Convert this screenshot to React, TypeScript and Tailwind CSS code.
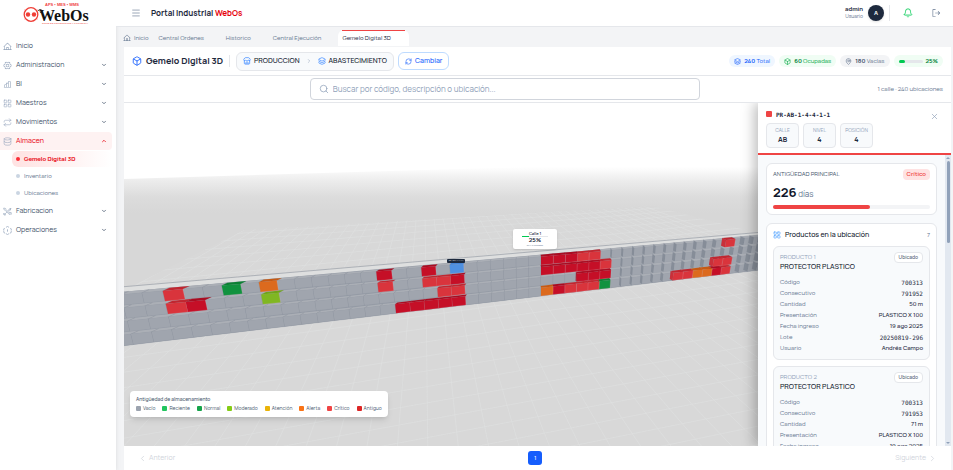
// Portal shell with the "Gemelo Digital 3D" warehouse view
import React, { useState } from 'react';
import {
  Bell,
  Box,
  ChevronDown,
  ChevronLeft,
  ChevronRight,
  ChevronUp,
  Database,
  Layers,
  LayoutGrid,
  MapPin,
  Menu,
  RefreshCw,
  Repeat,
  Search,
  Store,
  X,
} from 'lucide-react';
import { PiChartBar, PiGearSix, PiHouseLine, PiSignOut } from 'react-icons/pi';

type Tone = 'antiguo' | 'critico' | 'alerta' | 'normal' | 'moderado' | 'selected';

interface Product {
  id: number;
  name: string;
  rows: { label: string; value: string; mono?: boolean }[];
}

const legend = [
  { name: 'Vacío', color: 'bg-[#9ca3af]' },
  { name: 'Reciente', color: 'bg-[#22c55e]' },
  { name: 'Normal', color: 'bg-[#16a34a]' },
  { name: 'Moderado', color: 'bg-[#84cc16]' },
  { name: 'Atención', color: 'bg-[#eab308]' },
  { name: 'Alerta', color: 'bg-[#f97316]' },
  { name: 'Crítico', color: 'bg-[#ef4444]' },
  { name: 'Antiguo', color: 'bg-[#dc2626]' },
];

const makeProduct = (id: number, consecutivo: string, cantidad: string): Product => ({
  id,
  name: 'PROTECTOR PLASTICO',
  rows: [
    { label: 'Código', value: '700313', mono: true },
    { label: 'Consecutivo', value: consecutivo, mono: true },
    { label: 'Cantidad', value: cantidad },
    { label: 'Presentación', value: 'PLASTICO X 100' },
    { label: 'Fecha ingreso', value: '19 ago 2025' },
    { label: 'Lote', value: '20250819-296', mono: true },
    { label: 'Usuario', value: 'Andrés Campo' },
  ],
});

const products = [makeProduct(1, '791952', '50 m'), makeProduct(2, '791953', '71 m')];

// ---------- Rack drawing ----------

const tones: Record<Tone, { front: string; top: string; side: string }> = {
  antiguo: { front: '#c50f27', top: '#a90d22', side: '#b00d23' },
  critico: { front: '#d9343c', top: '#c02630', side: '#c9303a' },
  alerta: { front: '#dc6a1e', top: '#c65a14', side: '#c65a14' },
  normal: { front: '#11923f', top: '#0c8034', side: '#0c8034' },
  moderado: { front: '#80b722', top: '#6fa51a', side: '#6fa51a' },
  selected: { front: '#4f90e0', top: '#4383d6', side: '#4383d6' },
};

const emptyTone = { front: '#a0a5ae', top: '#abafb6', side: '#868d98' };

// level -> [from column, to column, tone]
const stock: [number, number, Tone][][] = [
  [[-24, -24, 'critico'], [-21, -21, 'normal'], [-19, -19, 'alerta'], [-12, -12, 'antiguo'], [-9, -9, 'antiguo'], [-7, -7, 'selected'], [0, 2, 'antiguo'], [3, 4, 'critico'], [17, 17, 'critico']],
  [[-24, -24, 'critico'], [-23, -23, 'antiguo'], [-19, -19, 'moderado'], [-12, -12, 'critico'], [-9, -8, 'critico'], [-7, -7, 'antiguo'], [0, 4, 'antiguo'], [5, 5, 'critico']],
  [[-8, -7, 'critico'], [3, 5, 'antiguo'], [16, 17, 'critico']],
  [[-11, -7, 'antiguo'], [0, 0, 'alerta'], [1, 1, 'antiguo'], [2, 4, 'critico'], [5, 5, 'normal'], [12, 13, 'critico'], [14, 15, 'alerta'], [16, 16, 'antiguo'], [17, 17, 'critico']],
];

// single cells of a level, farthest from the camera first
const cellsOf = (level: number) =>
  stock[level]
    .flatMap(([from, to, tone]) => Array.from({ length: to - from + 1 }, (_, i) => ({ column: from + i, tone })))
    .sort((a, b) => Math.abs(b.column + 6) - Math.abs(a.column + 6));

const project = (k: number, v: number) => {
  const base = k > 0 ? 417 + (12.1 * k) / (1 + 0.0086 * k) : 417 + (11.8 * k) / (1 + 0.0095 * k);
  const x = base - (417 - base) * 0.033 * (1 - v);
  const top = 188.7 - 0.089 * x;
  const bottom = 242.7 - 0.119 * x;
  return [x, top + (bottom - top) * v] as const;
};

const pts = (list: (readonly [number, number])[]) =>
  list.map(([x, y]) => `${x.toFixed(1)},${y.toFixed(1)}`).join(' ');

function Cell({ column, level, tone }: { column: number; level: number; tone?: Tone }) {
  const c = tone ? tones[tone] : emptyTone;
  const v0 = level / 4 + 0.05;
  const v1 = level / 4 + 0.25;
  const a = project(column, v0);
  const b = project(column + 1, v0);
  const d = project(column + 1, v1);
  const e = project(column, v1);
  const dx = (400 - a[0]) * 0.019;
  const dy = a[0] < 250 ? -3.4 + a[0] * 0.006 : -1.9;
  const shift = (p: readonly [number, number]) => [p[0] + dx, p[1] + dy] as const;
  const line = tone ? '#f3c4c6' : '#7f8692';
  return (
    <g>
      {dx < -1 && <polygon points={pts([a, shift(a), [e[0] + dx, e[1] - 1.5], e])} fill={c.side} />}
      <polygon points={pts([a, b, shift(b), shift(a)])} fill={c.top} />
      {!tone && <polyline points={pts([a, shift(a)])} stroke={line} strokeOpacity={0.6} strokeWidth={0.5} />}
      {!tone && <polyline points={pts([a, b])} stroke={line} strokeOpacity={0.35} strokeWidth={0.4} />}
      <polygon points={pts([a, b, d, e])} fill={c.front} />
      <polyline points={pts([b, d])} stroke={line} strokeOpacity={tone ? 0.3 : 0.7} strokeWidth={0.6} />
      <polyline points={pts([e, d])} stroke={line} strokeOpacity={tone ? 0.3 : 0.45} strokeWidth={0.5} />
    </g>
  );
}

function WarehouseScene() {
  const columns = Array.from({ length: 50 }, (_, i) => i - 28);
  const levels = [0, 1, 2, 3];
  return (
    <svg
      viewBox="0 0 634 343"
      preserveAspectRatio="xMinYMin slice"
      className="block h-full w-full bg-white"
      role="img"
      aria-label="Calle 1"
    >
      <defs>
        <linearGradient id="haze" x1="0" y1="64" x2="0" y2="110" gradientUnits="userSpaceOnUse">
          <stop offset="0" stopColor="#ffffff" />
          <stop offset="0.3" stopColor="#ececec" />
          <stop offset="0.65" stopColor="#dcdcdc" />
          <stop offset="1" stopColor="#d7d7d7" />
        </linearGradient>
        <clipPath id="gridArea">
          <polygon points="0,187 120,127 530,103 634,130 634,343 0,343" />
        </clipPath>
      </defs>
      <polygon points="0,76 634,57 634,343 0,343" fill="url(#haze)" />
      <g clipPath="url(#gridArea)">
        <rect y="100" width="634" height="243" fill="#d8d8d8" />
        <g stroke="#dfe0e0" strokeWidth="0.6">
          {Array.from({ length: 56 }, (_, i) => (
            <line key={`v${i}`} x1={300} y1={20} x2={-560 + i * 32} y2={360} />
          ))}
          {Array.from({ length: 30 }, (_, i) => {
            const y = 112 + i * 4 + i * i * 0.35;
            return <line key={`h${i}`} x1={0} y1={y + 20 + i * 2} x2={634} y2={y - 20 - i * 2} />;
          })}
        </g>
      </g>

      {/* back rail and shelf edge */}
      <polygon points="0,184 634,129.500 634,133 0,189" fill="#dedfdf" />
      <line x1="0" y1="183.700" x2="634" y2="129.500" stroke="#9a9fa8" strokeWidth="0.7" />
      <polygon points="0,188.700 634,132.300 634,167.300 0,242.700" fill="#989ea8" />
      {levels.map((level) =>
        columns.map((k) => <Cell key={`${level}:${k}`} column={k} level={level} />)
      )}
      {levels
        .slice()
        .reverse()
        .map((level) =>
          cellsOf(level).map(({ column, tone }) => (
            <Cell key={`s${level}:${column}`} column={column} level={level} tone={tone} />
          ))
        )}
    </svg>
  );
}

// ---------- Sidebar ----------

function Logo() {
  return (
    <svg viewBox="0 0 72 26" className="h-[26px] w-[72px]" role="img" aria-label="WebOs">
      <text x="42" y="5" textAnchor="middle" fontSize="4" fontWeight="700" fill="#ef4444" fontFamily="Liberation Sans, sans-serif">
        APS • MES • WMS
      </text>
      <circle cx="11" cy="13.500" r="6.800" fill="none" stroke="#ef3e36" strokeWidth="1.300" />
      <circle cx="8" cy="13.500" r="2.200" fill="#ef3e36" />
      <circle cx="14" cy="13.500" r="2.200" fill="#ef3e36" />
      <path d="M6 10l-1.500-1M16 10l1.500-1M6 17l-1.500 1M16 17l1.500 1" stroke="#ef3e36" strokeWidth="0.700" />
      <path d="M18 10c1-2 4-2 4 0s-2 2-2 .5" fill="none" stroke="#111" strokeWidth="0.900" />
      <text x="19" y="20" fontSize="16" fontWeight="700" fill="#111" fontFamily="Liberation Serif, serif">
        WebOs
      </text>
      <text x="45" y="23" textAnchor="middle" fontSize="2.500" fontWeight="700" fill="#f26a63" fontFamily="Liberation Sans, sans-serif">
        SUITE DE PRODUCCION Y LOGISTICA
      </text>
    </svg>
  );
}

interface NavItemProps {
  icon: React.ReactNode;
  label: string;
  expandable?: boolean;
  active?: boolean;
  onClick?: () => void;
}

function NavItem({ icon, label, expandable = true, active = false, onClick }: NavItemProps) {
  return (
    <button
      onClick={onClick}
      aria-expanded={expandable ? active : undefined}
      className={`flex h-[18px] w-full items-center gap-1 rounded-r pr-[5px] pl-[3px] text-[7px] ${
        active ? 'bg-red-50 text-red-600' : 'text-slate-600'
      }`}
    >
      <span className="text-slate-400">{icon}</span>
      <span className="flex-1 text-left">{label}</span>
      {expandable && (active ? <ChevronUp size={6} strokeWidth={3} /> : <ChevronDown size={6} strokeWidth={3} />)}
    </button>
  );
}

function Sidebar() {
  const [open, setOpen] = useState(true);
  const subItems = ['Gemelo Digital 3D', 'Inventario', 'Ubicaciones'];
  return (
    <aside className="w-[116px] shrink-0 bg-white pr-1 shadow-md">
      <div className="flex h-[37px] items-start pt-px pl-5">
        <Logo />
      </div>
      <nav className="flex flex-col gap-px">
        <NavItem icon={<PiHouseLine size={9} />} label="Inicio" expandable={false} />
        <NavItem icon={<PiGearSix size={9} />} label="Administracion" />
        <NavItem icon={<PiChartBar size={9} />} label="BI" />
        <NavItem icon={<LayoutGrid size={9} strokeWidth={1.5} />} label="Maestros" />
        <NavItem icon={<Repeat size={9} strokeWidth={1.5} />} label="Movimientos" />
        <NavItem icon={<Database size={9} strokeWidth={1.5} />} label="Almacen" active={open} onClick={() => setOpen(!open)} />
        {open && (
          <div className="flex flex-col gap-px pl-3">
            {subItems.map((item, index) => (
              <a
                key={item}
                href="#"
                className={`flex h-4 items-center gap-1 rounded-md pl-1 text-[6px] ${
                  index === 0 ? 'bg-linear-to-r from-red-100 to-white font-bold text-red-600' : 'text-slate-500'
                }`}
              >
                <span className={`size-1 rounded-full ${index === 0 ? 'bg-red-500' : 'bg-slate-300'}`} />
                {item}
              </a>
            ))}
          </div>
        )}
        <NavItem
          icon={
            <svg width="9" height="9" viewBox="0 0 24 24" fill="none" stroke="currentColor" strokeWidth="1.6" strokeLinecap="round" strokeLinejoin="round">
              <path d="M3 3l4 1 1 3 12 12-2 2L6 9 3 7zM14 9l5-6 2 2-6 5M10 14l-6 6M21 4l-2 5M3 17l4 4-3 1-2-2zM17 14l5 1v4" />
            </svg>
          }
          label="Fabricacion"
        />
        <NavItem
          icon={
            <svg width="9" height="9" viewBox="0 0 24 24" fill="none" stroke="currentColor" strokeWidth="2" strokeLinecap="round">
              <path d="M9 3l3-2 3 2M4 6L2 8v3M20 6l2 2v3M2 15v2l3 2M22 15v2l-3 2M9 21l3 2 3-2M12 10v4" />
            </svg>
          }
          label="Operaciones"
        />
      </nav>
    </aside>
  );
}

// ---------- Top bars ----------

function Header() {
  return (
    <header className="flex h-[27px] shrink-0 items-center border-b border-gray-200 bg-white px-3 pl-[15px]">
      <button aria-label="Menú" className="text-slate-500">
        <Menu size={10} strokeWidth={1.5} />
      </button>
      <h1 className="ml-[10px] text-[8px] font-bold text-slate-800">
        Portal Industrial <span className="text-red-600">WebOs</span>
      </h1>
      <div className="ml-auto flex items-center">
        <div className="text-right">
          <p className="text-[6px] leading-[8px] font-bold text-slate-800">admin</p>
          <p className="text-[5px] leading-[8px] text-slate-500">Usuario</p>
        </div>
        <span className="ml-[5px] flex size-4 items-center justify-center rounded-full bg-slate-800 text-[6px] font-bold text-white shadow">
          A
        </span>
        <span className="mx-[5px] h-4 w-px bg-gray-200" />
        <button aria-label="Notificaciones" className="ml-2 text-green-500">
          <Bell size={10} strokeWidth={2} />
        </button>
        <button aria-label="Salir" className="ml-[18px] text-slate-500">
          <PiSignOut size={10} />
        </button>
      </div>
    </header>
  );
}

function TabBar() {
  const tabs = ['Central Ordenes', 'Historico', 'Central Ejecución'];
  return (
    <div className="flex h-5 shrink-0 items-end pb-px pl-[7px] text-[6px] text-slate-500">
      <a href="#" className="flex h-4 items-center gap-[3px] pr-[5px]">
        <PiHouseLine size={8} />
        Inicio
      </a>
      {tabs.map((tab) => (
        <a key={tab} href="#" className="flex h-4 items-center pr-[17px] pl-[5px]">
          {tab}
        </a>
      ))}
      <a href="#" className="h-4 rounded-t-md bg-white px-1 text-slate-800">
        <span className="block h-px bg-[#ef4444]" />
        <span className="flex h-[14px] items-center pr-[14px]">Gemelo Digital 3D</span>
      </a>
    </div>
  );
}

function TitleBar() {
  const chip = 'flex h-3 items-center gap-[3px] rounded-md px-[5px]';
  return (
    <div className="flex h-[29px] shrink-0 items-center border-b border-gray-200 bg-white px-2">
      <Box size={10} strokeWidth={2} className="text-blue-600" />
      <h2 className="ml-1 text-[9px] font-bold text-slate-800">Gemelo Digital 3D</h2>
      <span className="mx-1.5 h-3 w-px bg-gray-200" />
      <div className="flex h-[19px] items-center gap-[3px] rounded-md border border-gray-200 bg-slate-50 px-1.5 text-[7px] font-medium text-slate-900">
        <Store size={8} className="text-blue-500" />
        PRODUCCION
        <ChevronRight size={6} className="mx-[3px] text-slate-400" />
        <Layers size={8} className="text-blue-500" />
        ABASTECIMIENTO
      </div>
      <button className="ml-1 flex h-[18px] items-center gap-[3px] rounded-md border border-blue-200 bg-white px-1.5 text-[7px] font-medium text-blue-600">
        <RefreshCw size={7} />
        Cambiar
      </button>
      <div className="ml-auto flex gap-1 text-[6px]">
        <span className={`${chip} bg-blue-50 text-blue-600`}>
          <Layers size={7} />
          <span><b>240</b> Total</span>
        </span>
        <span className={`${chip} bg-green-50 text-green-600`}>
          <Box size={7} />
          <span><b className="text-green-700">60</b> Ocupadas</span>
        </span>
        <span className={`${chip} bg-gray-100 text-slate-500`}>
          <MapPin size={7} />
          <span><b className="text-slate-600">180</b> Vacías</span>
        </span>
        <span className={`${chip} bg-green-50 text-green-700`}>
          <span className="h-[3px] w-6 rounded-full bg-gray-200">
            <span className="block h-full w-1/4 rounded-full bg-green-500" />
          </span>
          <b>25%</b>
        </span>
      </div>
    </div>
  );
}

function SearchRow() {
  const [query, setQuery] = useState('');
  return (
    <div className="flex h-[27px] shrink-0 items-center border-b border-gray-200 bg-white px-2">
      <div className="flex flex-1 justify-center">
        <label className="flex h-[22px] w-full max-w-[390px] items-center gap-1 rounded border border-gray-300 bg-white px-2 text-slate-400">
          <Search size={10} strokeWidth={1.8} />
          <input
            type="text"
            value={query}
            onChange={(e) => setQuery(e.target.value)}
            placeholder="Buscar por código, descripción o ubicación..."
            aria-label="Buscar"
            className="flex-1 text-[8px] text-slate-700 outline-none placeholder:text-slate-400"
          />
        </label>
      </div>
      <span className="text-[6px] text-slate-500">1 calle · 240 ubicaciones</span>
    </div>
  );
}

// ---------- Detail panel ----------

function ProductCard({ product }: { product: Product }) {
  return (
    <article className="rounded-md border border-gray-200 bg-slate-50 px-1.5 py-[5px]">
      <div className="flex items-start justify-between">
        <div>
          <p className="text-[6px] leading-[10px] text-slate-400">PRODUCTO {product.id}</p>
          <h4 className="text-[7px] leading-[10px] font-medium text-slate-900">{product.name}</h4>
        </div>
        <span className="rounded border border-gray-200 bg-white px-1 text-[5px] leading-[9px] font-medium text-slate-600">
          Ubicado
        </span>
      </div>
      <dl className="mt-[5px] text-[6px] leading-[11px]">
        {product.rows.map((row) => (
          <div key={row.label} className="flex h-[11px] justify-between">
            <dt className="text-slate-500">{row.label}</dt>
            <dd className={`text-slate-800 ${row.mono ? "font-['DejaVu_Sans_Mono',monospace]" : 'font-medium'}`}>
              {row.value}
            </dd>
          </div>
        ))}
      </dl>
    </article>
  );
}

function DetailPanel() {
  const location = [
    { label: 'CALLE', value: 'AB' },
    { label: 'NIVEL', value: '4' },
    { label: 'POSICIÓN', value: '4' },
  ];
  return (
    <section className="relative flex w-[193px] shrink-0 flex-col bg-white shadow-[-4px_0_12px_rgba(0,0,0,0.25)]">
      <div className="border-b-2 border-[#ef4444] px-2 py-[5px]">
        <div className="flex h-3 items-center gap-1">
          <span className="size-[6px] rounded-[1px] bg-[#ef4444]" />
          <h3 className="font-['DejaVu_Sans_Mono',monospace] text-[6px] font-bold text-slate-800">PR-AB-1-4-4-1-1</h3>
          <button aria-label="Cerrar" className="mt-1 mr-1 ml-auto text-slate-400">
            <X size={9} strokeWidth={1.8} />
          </button>
        </div>
        <dl className="mt-[3px] flex gap-1">
          {location.map((item) => (
            <div key={item.label} className="flex h-[25px] w-[33px] flex-col items-center justify-center rounded border border-gray-200 bg-slate-50">
              <dt className="text-[5px] leading-[8px] text-slate-400">{item.label}</dt>
              <dd className="text-[7px] leading-[9px] font-bold text-slate-800">{item.value}</dd>
            </div>
          ))}
        </dl>
      </div>

      <div className="flex min-h-0 flex-1 bg-slate-50">
        <div className="flex min-w-0 flex-1 flex-col gap-2 overflow-hidden p-2">
          <div className="shrink-0 rounded-md border border-gray-200 bg-white px-1.5 py-[5px]">
            <div className="flex items-center justify-between">
              <h4 className="text-[6px] text-slate-600">ANTIGÜEDAD PRINCIPAL</h4>
              <span className="rounded bg-red-100 px-1 text-[6px] leading-[11px] font-semibold text-[#ef4444]">Crítico</span>
            </div>
            <p className="mt-1 text-[8px] leading-[17px] text-slate-500">
              <b className="text-[13px] text-slate-900">226</b> días
            </p>
            <div className="mt-[3px] h-1 rounded-full bg-gray-100">
              <div className="h-full w-[62%] rounded-full bg-[#ef4444]" />
            </div>
          </div>

          <div className="shrink-0 rounded-md border border-gray-200 bg-white px-1.5 pt-[5px]">
            <div className="flex h-3 items-center gap-1">
              <LayoutGrid size={8} className="text-blue-400" />
              <h4 className="text-[7px] font-medium text-slate-900">Productos en la ubicación</h4>
              <span className="ml-auto text-[6px] text-slate-500">7</span>
            </div>
            <div className="mt-[5px] flex flex-col gap-1.5">
              {products.map((product) => (
                <ProductCard key={product.id} product={product} />
              ))}
            </div>
          </div>
        </div>
        <div className="flex w-[6px] flex-col items-center justify-between bg-slate-200 py-[2px]">
          <span className="border-x-2 border-b-2 border-x-transparent border-b-slate-400" />
          <span className="mt-[2px] h-[82px] w-[3px] rounded-full bg-slate-400" />
          <span className="mt-auto border-x-2 border-t-2 border-x-transparent border-t-slate-400" />
        </div>
      </div>
    </section>
  );
}

function Pagination() {
  return (
    <footer className="flex h-6 shrink-0 items-center justify-between bg-white px-[14px] text-[7px] text-gray-300">
      <button disabled className="flex items-center gap-[2px]">
        <ChevronLeft size={9} />
        Anterior
      </button>
      <button className="size-[14px] rounded-[3px] bg-blue-600 text-[6px] font-medium text-white">1</button>
      <button disabled className="flex items-center gap-[2px]">
        Siguiente
        <ChevronRight size={9} />
      </button>
    </footer>
  );
}

export default function App() {
  return (
    <div className="flex h-screen overflow-hidden bg-gray-100 font-[Manrope,Inter,sans-serif]">
      <Sidebar />
      <div className="flex min-w-0 flex-1 flex-col">
        <Header />
        <TabBar />
        <main className="mr-[2px] ml-2 flex min-h-0 flex-1 flex-col">
          <TitleBar />
          <SearchRow />
          <div className="flex min-h-0 flex-1 overflow-hidden">
            <div className="relative min-w-0 flex-1 overflow-hidden">
              <WarehouseScene />
              <div className="absolute top-[126px] left-[389px] flex h-5 w-11 flex-col items-center rounded-[2px] bg-white pt-[2px] text-slate-800 shadow">
                <span className="text-[4px] leading-[5px] font-semibold">Calle 1</span>
                <span className="flex h-px w-[26px] bg-gray-200">
                  <span className="h-px w-1/4 bg-green-500" />
                </span>
                <span className="text-[6px] leading-[7px] font-bold">25%</span>
                <span className="text-[2px] leading-[3px] text-slate-500">60/240 ocupadas</span>
              </div>
              <div className="absolute top-[156px] left-[323px] h-1 w-[18px] rounded-[1px] bg-slate-800 text-center text-[2px] leading-[4px] text-white">
                PR-AB-1-4-4-1-1
              </div>
              <div className="absolute bottom-[29px] left-1.5 rounded bg-white px-1.5 py-1 text-slate-600 shadow-md">
                <p className="text-[5px] leading-[9px] font-medium">Antigüedad de almacenamiento</p>
                <ul className="flex gap-[7px] text-[5px] leading-[9px]">
                  {legend.map((item) => (
                    <li key={item.name} className="flex items-center gap-[2px]">
                      <span className={`size-[5px] rounded-[1px] ${item.color}`} />
                      {item.name}
                    </li>
                  ))}
                </ul>
              </div>
            </div>
            <DetailPanel />
          </div>
          <Pagination />
        </main>
      </div>
    </div>
  );
}
